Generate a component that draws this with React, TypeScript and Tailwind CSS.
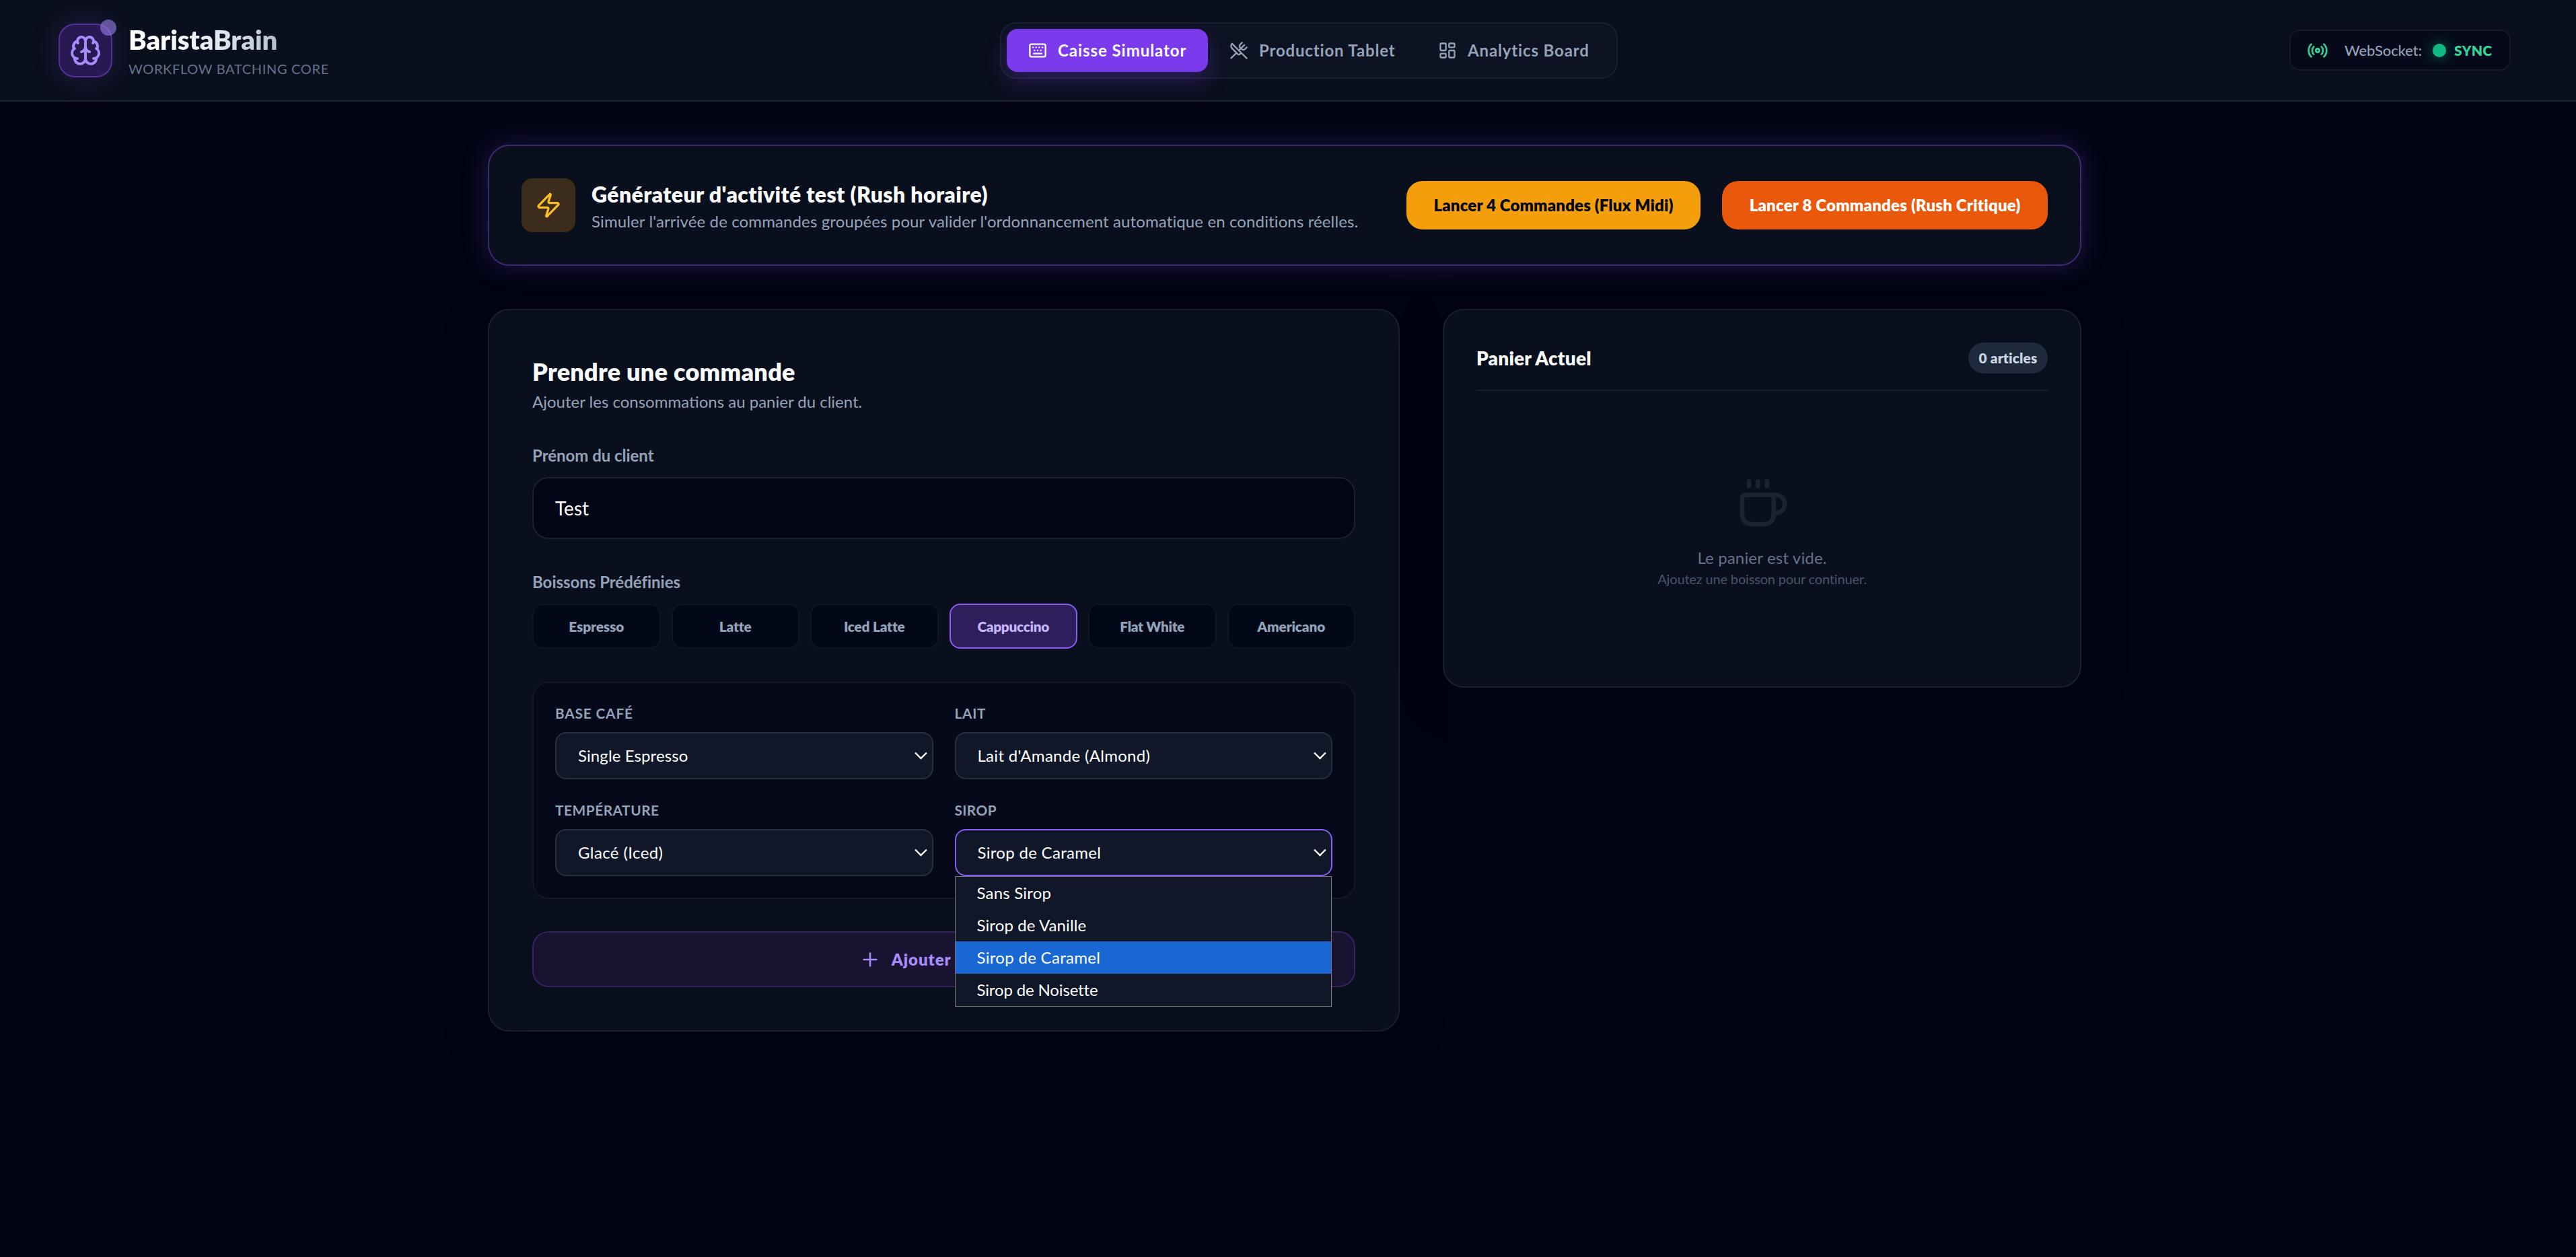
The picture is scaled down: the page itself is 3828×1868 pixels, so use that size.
import { Brain, Keyboard, UtensilsCrossed, LayoutDashboard, Radio, Zap, Plus } from 'lucide-react'

function Chevron() {
  return (
    <svg className="mr-[7px] h-[12px] w-[19px]" viewBox="0 0 19 12" fill="none" stroke="white" strokeWidth="2.4">
      <path d="M1 1.5 9.5 10 18 1.5" />
    </svg>
  )
}

function Mug() {
  return (
    <svg className="mt-32 size-20 text-[#1c2232]" viewBox="0 0 24 24" fill="none" stroke="currentColor" strokeWidth="2" strokeLinecap="round" strokeLinejoin="round">
      <path d="M6 2v2M10 2v2M14 2v2" />
      <path d="M16 8a1 1 0 0 1 1 1v8a4 4 0 0 1-4 4H7a4 4 0 0 1-4-4V9a1 1 0 0 1 1-1h14a4 4 0 1 1 0 8h-1" />
    </svg>
  )
}

type FieldProps = { label: string; labelClass: string; value: string; valueClass: string; open?: boolean }

function Field({ label, labelClass, value, valueClass, open }: FieldProps) {
  return (
    <div className="relative flex flex-col">
      <div className={'h-[26px] text-[20.8px] leading-[26px] font-bold whitespace-nowrap text-[#94a3b8] ' + labelClass}>{label}</div>
      <div className={'mt-[15px] flex h-[70px] items-center justify-between rounded-2xl border-2 bg-[#0f1729] pl-8 text-[24px] whitespace-nowrap text-white ' + (open ? 'border-[#8b5cf6]' : 'border-[#272f3f]')}>
        <span className={valueClass}>{value}</span>
        <Chevron />
      </div>
      {open && (
        <div className="absolute top-[111px] right-px left-0 z-10 border border-[#767676] bg-[#0f1729] text-[24px] leading-[48px] whitespace-nowrap text-white">
          <div className="h-12 pl-8 tracking-[0.2px]">Sans Sirop</div>
          <div className="h-12 pl-8 tracking-[0.1px]">Sirop de Vanille</div>
          <div className="h-12 bg-[#1967d2] pl-8 tracking-[0.3px]">Sirop de Caramel</div>
          <div className="h-12 pl-8 tracking-[-0.15px]">Sirop de Noisette</div>
        </div>
      )}
    </div>
  )
}

const drinks = [
  { name: 'Espresso', tracking: 'tracking-[-0.08px]' },
  { name: 'Latte', tracking: 'tracking-[-0.16px]' },
  { name: 'Iced Latte', tracking: 'tracking-[-0.19px]' },
  { name: 'Cappuccino', tracking: 'tracking-[-0.3px]' },
  { name: 'Flat White', tracking: 'tracking-[-0.3px]' },
  { name: 'Americano', tracking: 'tracking-[-0.13px]' },
]

function Header() {
  return (
    <header className="flex h-[151px] items-center justify-between border-b-2 border-[#1e2433] bg-[#0a0f1d] pr-[97px] pl-[87px] whitespace-nowrap">
      <div className="flex items-center gap-6">
        <div className="relative flex size-20 items-center justify-center rounded-3xl border-2 border-[#52309a] bg-[#271a52] text-[#a78bfa] shadow-[0_0_40px_rgba(139,92,246,0.2)]">
          <Brain size={48} />
          <div className="absolute -top-2 -right-2 size-6 rounded-full bg-[#a78bfa]/55" />
        </div>
        <div className="flex w-[297px] flex-col items-start pb-[2px]">
          <div className="h-14 bg-gradient-to-r from-white from-20% via-slate-200 via-60% to-slate-400 to-130% bg-clip-text text-[40px] leading-[56px] font-extrabold tracking-[-0.08px] text-transparent">BaristaBrain</div>
          <div className="h-[30px] text-[20px] leading-[30px] tracking-[0.68px] text-[#64748b]">WORKFLOW BATCHING CORE</div>
        </div>
      </div>
      <nav className="flex h-[84px] rounded-3xl border-2 border-[#1b2030] bg-[#0e1324] p-2 text-[24px] font-bold text-[#94a3b8]">
        <div className="flex w-[299px] items-center gap-4 rounded-2xl bg-[#7c3aed] pl-8 tracking-[0.95px] text-white shadow-[0_16px_32px_rgba(124,58,237,0.25)]">
          <Keyboard size={28} />
          <span>Caisse Simulator</span>
        </div>
        <div className="flex w-[310px] items-center gap-4 pl-8 tracking-[0.83px]">
          <UtensilsCrossed size={28} />
          <span>Production Tablet</span>
        </div>
        <div className="flex w-[289px] items-center gap-4 pl-8 tracking-[0.86px]">
          <LayoutDashboard size={28} />
          <span>Analytics Board</span>
        </div>
      </nav>
      <div className="flex h-[61px] w-[329px] items-center rounded-2xl border-2 border-[#151929] bg-[#060919] pl-6 text-[22px]">
        <Radio size={32} className="text-[#34d399]" />
        <div className="ml-6 w-[115px] font-medium tracking-[-0.12px] text-[#94a3b8]">WebSocket:</div>
        <div className="ml-[16px] size-5 rounded-full bg-[#10b981] shadow-[0_0_20px_rgba(16,185,129,0.6)]" />
        <div className="ml-3 text-[21px] font-extrabold tracking-[0.2px] text-[#34d399]">SYNC</div>
      </div>
    </header>
  )
}

function RushBanner() {
  return (
    <section className="flex h-[180px] items-center rounded-[32px] border-2 border-[#3b2a72] bg-[#0a0f1d] px-12 whitespace-nowrap shadow-[0_0_40px_rgba(139,92,246,0.22)]">
      <div className="flex size-20 items-center justify-center rounded-2xl bg-[#3b2c1c] text-[#fbbf24]">
        <Zap size={40} />
      </div>
      <div className="ml-6 flex flex-1 flex-col pt-[3px]">
        <div className="h-[45px] text-[32px] leading-[45px] font-extrabold tracking-[0.38px] text-[#f8fafc]">Générateur d'activité test (Rush horaire)</div>
        <div className="h-[36px] text-[24px] leading-[36px] tracking-[0.12px] text-[#94a3b8]">Simuler l'arrivée de commandes groupées pour valider l'ordonnancement automatique en conditions réelles.</div>
      </div>
      <div className="flex h-[72px] w-[437px] items-center justify-center rounded-3xl bg-[#f59e0b] text-[24px] font-extrabold tracking-[0.17px] text-[#020617]">Lancer 4 Commandes (Flux Midi)</div>
      <div className="ml-8 flex h-[72px] w-[484px] items-center justify-center rounded-3xl bg-[#ea580c] text-[24px] font-extrabold tracking-[0.22px] text-white">Lancer 8 Commandes (Rush Critique)</div>
    </section>
  )
}

function OrderForm() {
  return (
    <section className="flex h-[1074px] w-[1355px] flex-col rounded-[32px] border-2 border-[#1b202e] bg-[#0a0f1d] px-16 pt-16 whitespace-nowrap shadow-[0_16px_64px_rgba(0,0,0,0.4)]">
      <div className="h-[54px] text-[36px] leading-[54px] font-extrabold tracking-[0.28px] text-[#f8fafc]">Prendre une commande</div>
      <div className="h-[36px] text-[24px] leading-[36px] text-[#94a3b8]">Ajouter les consommations au panier du client.</div>
      <div className="mt-[47px] h-[30px] text-[24px] leading-[30px] font-bold tracking-[-0.03px] text-[#94a3b8]">Prénom du client</div>
      <div className="mt-[17px] flex h-[92px] items-center rounded-3xl border-2 border-[#1b2130] bg-[#020617] pl-8 text-[28px]">Test</div>
      <div className="mt-[49px] h-[30px] text-[24px] leading-[30px] font-bold tracking-[-0.02px] text-[#94a3b8]">Boissons Prédéfinies</div>
      <div className="mt-[17px] grid h-[67px] grid-cols-6 gap-4 text-[20.8px] font-extrabold">
        {drinks.map(({ name, tracking }) => (
          <div
            key={name}
            className={
              'flex items-center justify-center rounded-2xl border-2 ' +
              tracking +
              (name === 'Cappuccino' ? ' border-[#8b5cf6] bg-[#2e1e5c] text-[#c4b5fd]' : ' border-[#0f1524] bg-[#030818] text-[#94a3b8]')
            }
          >
            {name}
          </div>
        ))}
      </div>
      <div className="mt-[49px] grid h-[323px] grid-cols-2 content-start gap-x-8 gap-y-[33px] rounded-3xl border-2 border-[#131727] bg-[#06091a] px-8 pt-8">
        <Field label="BASE CAFÉ" labelClass="tracking-[0.84px]" value="Single Espresso" valueClass="tracking-[0.1px]" />
        <Field label="LAIT" labelClass="tracking-[0.7px]" value="Lait d'Amande (Almond)" valueClass="tracking-[0.3px]" />
        <Field label="TEMPÉRATURE" labelClass="tracking-[0.55px]" value="Glacé (Iced)" valueClass="tracking-[0.4px]" />
        <Field label="SIROP" labelClass="tracking-[0.4px]" value="Sirop de Caramel" valueClass="tracking-[0.3px]" open />
      </div>
      <div className="mt-12 flex h-[83px] items-center justify-center gap-4 rounded-3xl border-2 border-[#35245f] bg-[#171331] text-[24px] font-extrabold tracking-[0.95px] text-[#a78bfa]">
        <Plus size={32} />
        <span>Ajouter au panier</span>
      </div>
    </section>
  )
}

function Cart() {
  return (
    <section className="flex h-[563px] w-[949px] flex-col items-center rounded-[32px] border-2 border-[#1b202e] bg-[#0a0f1d] px-12 pt-12 whitespace-nowrap shadow-[0_16px_64px_rgba(0,0,0,0.4)]">
      <div className="flex h-[72px] w-full items-start justify-between border-b-2 border-[#161c2b]">
        <div className="text-[28px] leading-[46px] font-extrabold tracking-[0.18px] text-[#f8fafc]">Panier Actuel</div>
        <div className="flex h-[46px] w-[118px] items-center justify-center rounded-full bg-[#1e293b] text-[20.8px] font-extrabold tracking-[0.17px] text-[#cbd5e1]">0 articles</div>
      </div>
      <Mug />
      <div className="mt-[22px] h-9 text-[24px] leading-9 tracking-[0.17px] text-[#64748b]">Le panier est vide.</div>
      <div className="h-[26px] text-[20px] leading-[26px] tracking-[-0.17px] text-[#475569]">Ajoutez une boisson pour continuer.</div>
    </section>
  )
}

export default function App() {
  return (
    <div className="flex h-[1868px] w-[3828px] flex-col overflow-hidden bg-[#020414] font-['Lato',sans-serif] text-white">
      <Header />
      <main className="ml-[725px] flex w-[2368px] flex-col gap-16 pt-16">
        <RushBanner />
        <div className="flex items-start gap-16">
          <OrderForm />
          <Cart />
        </div>
      </main>
    </div>
  )
}
